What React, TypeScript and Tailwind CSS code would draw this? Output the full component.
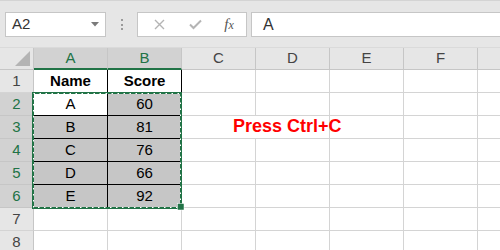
import React from "react";

const cols = ["A", "B", "C", "D", "E", "F", ""];
const data: Record<number, [string, string]> = {
  1: ["Name", "Score"],
  2: ["A", "60"],
  3: ["B", "81"],
  4: ["C", "76"],
  5: ["D", "66"],
  6: ["E", "92"],
};

function RowHeader({ n }: { n: number }) {
  const sel = n >= 2 && n <= 6;
  return (
    <div
      className={
        sel
          ? "w-[34px] h-[23px] shrink-0 box-border border-r border-b border-r-[#c6c6c6] border-b-[#c6c6c6] bg-[#d2d2d2] text-[#217346] flex items-center justify-center text-[15px]"
          : "w-[34px] h-[23px] shrink-0 box-border border-r border-b border-r-[#c6c6c6] border-b-[#d4d4d4] bg-[#e6e6e6] text-[#444] flex items-center justify-center text-[15px]"
      }
    >
      {n}
    </div>
  );
}

function TableCell({ text, bold, fill }: { text: string; bold?: boolean; fill?: boolean }) {
  return (
    <div
      className={
        (fill ? "bg-[#c6c6c6] " : "bg-white ") +
        (bold ? "font-bold " : "") +
        "w-[74px] h-[23px] shrink-0 box-border border-r border-b border-black flex items-center justify-center text-[15px] text-black"
      }
    >
      {text}
    </div>
  );
}

function EmptyCell() {
  return <div className="w-[74px] h-[23px] shrink-0 box-border border-r border-b border-[#d4d4d4]" />;
}

function Row({ n }: { n: number }) {
  const d = data[n];
  return (
    <div className="flex h-[23px]">
      <RowHeader n={n} />
      {d ? (
        <>
          <TableCell text={d[0]} bold={n === 1} fill={n > 2} />
          <TableCell text={d[1]} bold={n === 1} fill={n > 1} />
        </>
      ) : (
        <>
          <EmptyCell />
          <EmptyCell />
        </>
      )}
      {n === 3 ? (
        <div className="relative z-10 w-[74px] h-[23px] shrink-0 box-border border-b border-[#d4d4d4] flex items-center">
          <span className="pl-[51px] -mt-[2px] whitespace-nowrap text-[18px] font-bold text-[#ff0000]">
            Press Ctrl+C
          </span>
        </div>
      ) : (
        <EmptyCell />
      )}
      <EmptyCell />
      <EmptyCell />
      <EmptyCell />
      <EmptyCell />
    </div>
  );
}

export default function App() {
  return (
    <div className="w-[500px] h-[250px] overflow-hidden bg-white font-['Liberation_Sans',sans-serif] text-[#333]">
      {/* Toolbar */}
      <div className="h-[48px] bg-[#e6e6e6] border-t border-[#d4d4d4] box-border flex items-start pt-[11px] pl-[5px] border-b border-b-[#dadada]">
        <div className="w-[101px] h-[25px] shrink-0 bg-white border border-[#c6c6c6] box-border flex items-center justify-between pl-[6px] pr-[6px]">
          <span className="text-[15px] text-[#333]">A2</span>
          <svg width="8" height="5" viewBox="0 0 8 5">
            <path d="M0 0 L8 0 L4 4.5 Z" fill="#7a7a7a" />
          </svg>
        </div>
        <div className="w-[31px] h-[25px] shrink-0 flex flex-col items-center justify-center gap-[2.5px]">
          <div className="w-[2px] h-[2px] bg-[#9a9a9a]" />
          <div className="w-[2px] h-[2px] bg-[#9a9a9a]" />
          <div className="w-[2px] h-[2px] bg-[#9a9a9a]" />
        </div>
        <div className="w-[110px] h-[25px] shrink-0 bg-white border border-[#c6c6c6] box-border flex items-center">
          <div className="w-[40px] flex justify-center pl-[2px]">
            <svg width="11" height="11" viewBox="0 0 11 11">
              <path d="M1 1 L10 10 M10 1 L1 10" stroke="#b4b4b4" strokeWidth="1.4" />
            </svg>
          </div>
          <div className="w-[34px] flex justify-center">
            <svg width="13" height="11" viewBox="0 0 13 11">
              <path d="M1 5.5 L4.5 9 L12 1.5" stroke="#b4b4b4" strokeWidth="2" fill="none" />
            </svg>
          </div>
          <div className="w-[34px] flex justify-center">
            <span className="font-['Liberation_Serif',serif] italic text-[15px] text-[#555] leading-none">
              f<span className="text-[12px]">x</span>
            </span>
          </div>
        </div>
        <div className="w-[4px] shrink-0" />
        <div className="flex-1 h-[25px] bg-white border border-[#c6c6c6] border-r-0 box-border flex items-center pl-[11px]">
          <span className="text-[16px] text-[#333]">A</span>
        </div>
      </div>

      {/* Grid */}
      <div className="relative">
        {/* Column headers */}
        <div className="flex h-[22px]">
          <div className="w-[34px] h-[22px] shrink-0 box-border border-r border-b border-[#c6c6c6] bg-[#e6e6e6] flex items-end justify-end pr-[3px] pb-[3px]">
            <svg width="15" height="15" viewBox="0 0 15 15">
              <path d="M15 0 L15 15 L0 15 Z" fill="#b4b4b4" />
            </svg>
          </div>
          {cols.map((c, i) =>
            c === "A" || c === "B" ? (
              <div
                key={i}
                className="w-[74px] h-[22px] shrink-0 box-border border-r border-r-[#c6c6c6] border-b-2 border-b-[#217346] bg-[#d2d2d2] text-[#217346] text-[15px] flex items-center justify-center"
              >
                {c}
              </div>
            ) : (
              <div
                key={i}
                className="w-[74px] h-[22px] shrink-0 box-border border-r border-b border-[#c6c6c6] bg-[#e6e6e6] text-[#444] text-[15px] flex items-center justify-center"
              >
                {c}
              </div>
            )
          )}
        </div>
        {[1, 2, 3, 4, 5, 6, 7, 8].map((n) => (
          <Row key={n} n={n} />
        ))}

        {/* Selection marquee */}
        <svg
          className="absolute left-[32px] top-[44px] z-20"
          width="154"
          height="122"
          viewBox="0 0 154 122"
        >
          <rect x="1" y="1" width="148" height="115" fill="none" stroke="#217346" strokeWidth="2" />
          <rect
            x="1.5"
            y="1.5"
            width="147"
            height="114"
            fill="none"
            stroke="#ffffff"
            strokeWidth="1"
            strokeDasharray="1.5 4.5"
          />
          <rect x="145.5" y="111.5" width="6.5" height="6.5" fill="#217346" stroke="#ffffff" strokeWidth="0.5" />
        </svg>
      </div>
    </div>
  );
}
